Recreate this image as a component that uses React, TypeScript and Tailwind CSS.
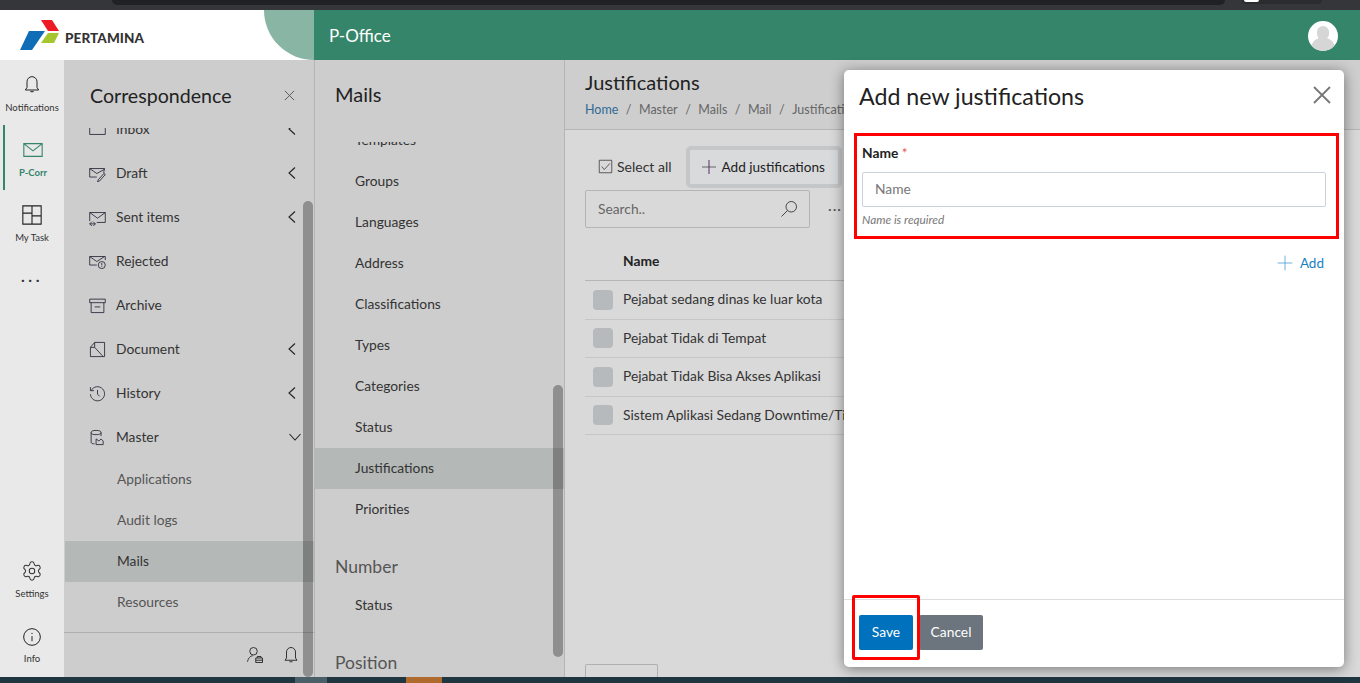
import type { ReactNode } from 'react';
import { Settings } from 'lucide-react';

const FONT = "font-['Lato','Noto_Sans',sans-serif]";

function Ico({ className, children, size = 24 }: { className?: string; children: ReactNode; size?: number }) {
  return (
    <svg width={size} height={size} viewBox="0 0 24 24" fill="none" stroke="currentColor" strokeWidth="1.2" className={className}>
      {children}
    </svg>
  );
}

function Logo() {
  return (
    <svg width="41" height="31" viewBox="0 0 41 31" className="shrink-0">
      <polygon points="21,0 32,0 39,11 28,11" fill="#ed1c24" />
      <polygon points="9,11 25,11 12,30 0,30" fill="#0f6cb6" />
      <polygon points="28,13 39,13 34,23 21,23" fill="#a5c62c" />
    </svg>
  );
}

const Chevron = ({ open }: { open?: boolean }) => (
  <svg width="10" height="14" viewBox="0 0 10 14" fill="none" stroke="#222" strokeWidth="1.1" className={open ? 'rotate-[-90deg]' : ''}>
    <path d="M8 1.5 2 7l6 5.5" />
  </svg>
);

function RailItem({ icon, label, active, tight }: { icon: ReactNode; label: string; active?: boolean; tight?: boolean }) {
  return (
    <div className={`flex h-[65px] flex-col items-center pt-[14px] ${tight ? 'gap-[5px]' : 'gap-[6px]'} ${active ? 'border-l-2 border-[#35856a] ml-[3px] pr-[3px] text-[#35856a] font-bold' : 'text-[#333]'}`}>
      <div className="flex h-[22px] items-center">{icon}</div>
      <span className="text-[9.5px] leading-[12px]">{label}</span>
    </div>
  );
}

const navItems: { label: string; icon: ReactNode; chevron?: boolean }[] = [
  { label: 'Inbox', chevron: true, icon: <path d="M1 5h22v14H1z" /> },
  { label: 'Draft', chevron: true, icon: <><path d="M1 5h21l-1 4v3M1 5v12h10" /><path d="m1 5 10 7 11-6M13 21l8-9 2 1.500-8 9-3 1z" /></> },
  { label: 'Sent items', chevron: true, icon: <><path d="M1 5h22v14H11M1 5v12" /><path d="m1 5 11 8 11-8M1 21h8m-3-3 3 3-3 3M4 18l-3 3 3 3" /></> },
  { label: 'Rejected', icon: <><path d="M1 5h22v5M1 5v12h10" /><path d="m1 5 10 7 11-7" /><circle cx="18" cy="17" r="5" /><path d="M18 14v3.500M18 18.500v1" /></> },
  { label: 'Archive', icon: <><path d="M1 3h22v5H1zM3 8v14h18V8M8 14h8" /></> },
  { label: 'Document', chevron: true, icon: <><path d="M2 9h6l12 13H2zM8 9V2h14v20h-2M2 9l6-7" /></> },
  { label: 'History', chevron: true, icon: <><path d="M3 8a10 10 0 1 1-1 5M2 3v5h5M12 7v6l3 3" /></> },
];

const subItems = ['Applications', 'Audit logs', 'Mails', 'Resources'];

const mailItems = ['Templates', 'Groups', 'Languages', 'Address', 'Classifications', 'Types', 'Categories', 'Status', 'Justifications', 'Priorities'];

const rows = ['Pejabat sedang dinas ke luar kota', 'Pejabat Tidak di Tempat', 'Pejabat Tidak Bisa Akses Aplikasi', 'Sistem Aplikasi Sedang Downtime/Tidak Aktif'];

function Sidebar() {
  return (
    <aside className="relative flex h-full w-[250px] shrink-0 flex-col bg-[#cdcdcd]">
      <div className="flex h-[68px] shrink-0 items-center justify-between pl-[26px] pr-[19px] pt-[3px]">
        <h2 className="text-[19.6px] leading-[26px] text-[#222]">Correspondence</h2>
        <svg width="11" height="11" viewBox="0 0 12 12" stroke="#555" strokeWidth="1"><path d="m1 1 10 10M11 1 1 11" /></svg>
      </div>
      <div className="min-h-0 flex-1 overflow-hidden">
        <div className="mt-[-21px]">
          {navItems.map((n) => (
            <div key={n.label} className="flex h-[44px] items-center pl-[25px] pr-[17px] text-[13.8px] text-[#333]">
              <Ico className="mr-[10px] text-[#2a2438]" size={17}>{n.icon}</Ico>
              <span className="flex-1">{n.label}</span>
              {n.chevron && <Chevron />}
            </div>
          ))}
          <div className="flex h-[44px] items-center pl-[25px] pr-[14px] text-[13.8px] text-[#333]">
            <Ico className="mr-[10px] text-[#2a2438]" size={17}>
              <><ellipse cx="10" cy="5" rx="7" ry="3" /><path d="M3 5v14c0 1 2 2 5 2M17 5v5M10 22v-8l4 3 3-3 3 3v5z" /></>
            </Ico>
            <span className="flex-1">Master</span>
            <Chevron open />
          </div>
          <div className="ml-px">
            {subItems.map((s) => (
              <div key={s} className={`flex h-[41px] items-center pl-[52px] text-[13.8px] ${s === 'Mails' ? 'bg-[#b4b8b7] text-[#333]' : 'text-[#555]'}`}>{s}</div>
            ))}
          </div>
        </div>
      </div>
      <div className="flex h-[45px] shrink-0 items-center justify-end gap-[18px] border-t border-[#b0b0b0] pr-[14px]">
        <Ico size={18} className="text-[#222]"><><circle cx="10" cy="7" r="5" /><path d="M2 21c1-5 4-8 7-8M13 16h9v6h-9zM15 16v-2h5v2M13 19h9" /></></Ico>
        <Ico size={18} className="text-[#222]"><path d="M4 19h16l-2-3V8a6 6 0 0 0-12 0v8zM10 21h4" /></Ico>
      </div>
      <div className="absolute right-[1px] top-[141px] bottom-0 w-[10px] rounded-full bg-black/30" />
    </aside>
  );
}

function MailsPanel() {
  return (
    <section className="relative h-full w-[250px] shrink-0 overflow-hidden border-l border-[#b5b5b5] bg-[#cdcdcd]">
      <h2 className="flex h-[68px] items-center pl-[20px] text-[20px] text-[#222]">Mails</h2>
      <div className="mt-[14px] h-[535px] overflow-hidden">
        <div className="mt-[-22px]">
          {mailItems.map((m) => (
            <div key={m} className={`flex h-[41px] items-center pl-[40px] text-[13.8px] text-[#333] ${m === 'Justifications' ? 'bg-[#b4b8b7]' : ''}`}>{m}</div>
          ))}
          <div className="flex h-[55px] items-end pb-[8px] pl-[20px] text-[17.5px] leading-[21px] text-[#555]">Number</div>
          <div className="flex h-[41px] items-center pl-[40px] text-[13.8px] text-[#333]">Status</div>
          <div className="flex h-[54px] items-end pb-[7px] pl-[20px] text-[17.5px] leading-[21px] text-[#555]">Position</div>
        </div>
      </div>
      <div className="absolute right-[1px] top-[325px] h-[272px] w-[10px] rounded-full bg-black/30" />
    </section>
  );
}

function Content() {
  return (
    <main className="flex h-full min-w-0 flex-1 flex-col overflow-hidden border-l border-[#b5b5b5] bg-[#d9d9d9]">
      <div className="h-[70px] shrink-0 border-b border-[#b5b5b5] bg-[#cecece] pl-[20px] pt-[9px]">
        <h1 className="text-[20px] leading-[26px] text-[#222]">Justifications</h1>
        <div className="mt-[6px] flex gap-[7.5px] whitespace-nowrap text-[12.5px] leading-[18px] text-[#666]">
          <span className="text-[#2f6a94]">Home</span><span>/</span><span>Master</span><span>/</span><span>Mails</span><span>/</span><span>Mail</span><span>/</span><span>Justifications</span>
        </div>
      </div>
      <div className="flex min-h-0 flex-1 flex-col px-[20px] pt-[16px]">
        <div className="flex items-center pl-[13px]">
          <Ico size={15} className="mb-px mr-[4px] text-[#333]"><path d="M2 2h20v20H2zM6 12l4 5 9-10" /></Ico>
          <span className="mb-px text-[14px] leading-[20px] text-[#333]">Select all</span>
          <div className="ml-[14px] flex h-[42px] w-[156px] items-center rounded-[5px] border-4 border-[#c4c6c8] bg-[#d9dadc] pl-[11px] text-[13.6px] text-[#222]">
            <svg width="16" height="16" viewBox="0 0 16 16" strokeWidth="1" className="mr-[5px]">
              <path d="M1 8h14" stroke="#666" />
              <path d="M8 1v14" stroke="#5a2a6a" />
            </svg>
            Add justifications
          </div>
        </div>
        <div className="mt-[2px] flex items-center">
          <div className="flex h-[38px] w-[225px] items-center justify-between rounded-[2px] border border-[#b5b5b5] pl-[12px] pr-[11px] text-[13.8px] text-[#666]">
            Search..
            <Ico size={18} className="text-[#333]"><><circle cx="15" cy="9" r="7" /><path d="M10 14 2 22" /></></Ico>
          </div>
          <span className="ml-[18px] text-[14px] leading-none tracking-[1px] text-[#555]">···</span>
        </div>
        <div className="mt-[14px] flex h-[39px] shrink-0 items-center border-b border-[#b5b5b5] pl-[38px] text-[13.8px] font-bold text-[#222]">Name</div>
        {rows.map((r) => (
          <div key={r} className="flex h-[38.5px] shrink-0 items-center whitespace-nowrap border-b border-[#c6c6c6] pl-[8px] text-[13.8px] text-[#333]">
            <span className="mr-[10px] h-[20px] w-[20px] shrink-0 rounded-[4px] bg-[#b7babc]" />
            {r}
          </div>
        ))}
        <div className="mt-auto h-[13px] w-[73px] shrink-0 overflow-hidden rounded-t-[2px] border border-b-0 border-[#b0b0b0] pl-[12px] pt-[9px] text-[12px] leading-[14px] text-[#333]">10</div>
      </div>
    </main>
  );
}

function Modal() {
  return (
    <div className="absolute left-[844px] top-[70px] flex h-[597px] w-[500px] flex-col rounded-[5px] bg-white shadow-[0_2px_14px_rgba(0,0,0,0.45)]">
      <div className="flex h-[63px] shrink-0 items-start justify-between pl-[15px] pr-[12px] pt-[12px] text-[#222]">
        <h3 className="text-[23.2px] leading-[28px]">Add new justifications</h3>
        <svg width="20" height="20" viewBox="0 0 20 20" stroke="#777" strokeWidth="1.8" className="mt-[3px]"><path d="m2 2 16 16M18 2 2 18" /></svg>
      </div>
      <div className="ml-[10px] mr-[5px] h-[106px] shrink-0 border-[3px] border-[#f00] pl-[5px] pr-[10px] pt-[8px]">
        <div className="text-[13.8px] font-bold leading-[18px] text-[#222]">Name <span className="font-normal text-[#e55]">*</span></div>
        <div className="mt-[10px] flex h-[35px] items-center rounded-[2px] border border-[#ccd2da] pl-[12px] text-[13.8px] text-[#777]">Name</div>
        <div className="mt-[6px] text-[11.8px] italic leading-[14px] text-[#777]">Name is required</div>
      </div>
      <div className="flex items-center justify-end pr-[20px] pt-[14px] text-[13.5px] text-[#1a7fc4]">
        <Ico size={16} className="mr-[7px] text-[#4a9fd8]"><path d="M12 1v22M1 12h22" /></Ico>
        Add
      </div>
      <div className="mt-auto flex h-[68px] shrink-0 items-center gap-[6px] border-t border-[#ddd] pb-[2px] pl-[15px]">
        <button className="relative h-[35px] w-[54px] rounded-[2px] bg-[#0071bc] text-[13.8px] text-white">
          Save
          <span className="absolute left-[-7px] top-[-20px] h-[65px] w-[68px] rounded-[2px] border-[3px] border-[#f00]" />
        </button>
        <button className="h-[35px] w-[64px] rounded-[2px] bg-[#6c757d] text-[13.8px] text-white">Cancel</button>
      </div>
    </div>
  );
}

export default function App() {
  return (
    <div className={`relative flex h-screen w-full flex-col overflow-hidden bg-[#cdcdcd] ${FONT}`}>
      <div className="flex h-[10px] shrink-0 items-start bg-[#35363a]">
        <div className="ml-[112px] h-[5px] w-[1113px] rounded-b-lg bg-[#202124]" />
        <div className="ml-[17px] h-[4px] w-[80px] overflow-hidden rounded-b-lg bg-[#2b2c30] pl-[2px]">
          <div className="h-[2px] w-[15px] rounded-b-full bg-white" />
        </div>
      </div>
      <header className="flex h-[50px] shrink-0">
        <div className="flex w-[314px] shrink-0 items-center justify-between overflow-hidden bg-white pl-[20px]">
          <div className="flex items-center gap-[4px]">
            <Logo />
            <span className="pt-[6px] text-[13.5px] font-black tracking-[0.1px] text-[#333]">PERTAMINA</span>
          </div>
          <div className="h-[50px] w-[50px] rounded-bl-[50px] bg-[#89b5a4]" />
        </div>
        <div className="flex flex-1 items-center justify-between bg-[#35856a] pl-[15px] pr-[22px] text-white">
          <span className="pt-px text-[17px]">P-Office</span>
          <div className="relative mt-px h-[30px] w-[30px] overflow-hidden rounded-full bg-white">
            <div className="mx-auto mt-[5px] h-[14px] w-[12px] rounded-full bg-[#d6d6d6]" />
            <div className="mx-auto mt-[-2px] h-[14px] w-[24px] rounded-t-[10px] bg-[#d6d6d6]" />
          </div>
        </div>
      </header>
      <div className="flex min-h-0 flex-1">
        <nav className="flex h-full w-[64px] shrink-0 flex-col bg-[#e9e9e9]">
          <RailItem label="Notifications" icon={<Ico size={20} className="text-[#222]"><path d="M4 18h16l-2-3V8a6 6 0 0 0-12 0v7zM10 20h4" /></Ico>} />
          <RailItem active label="P-Corr" icon={<Ico size={22}><path d="M2 5h20v14H2zM2 5l10 8 10-8" /></Ico>} />
          <RailItem label="My Task" icon={<Ico size={22} className="text-[#222]"><path d="M2 2h20v20H2zM12 2v20M12 13h10M2 10h10" /></Ico>} />
          <div className="mt-[13px] text-center text-[16px] font-bold leading-none tracking-[3.5px] text-[#333]">...</div>
          <div className="mt-auto flex flex-col gap-px">
            <RailItem label="Settings" icon={<Settings size={22} strokeWidth={1.1} className="text-[#333]" />} />
            <RailItem tight label="Info" icon={<Ico size={20} className="text-[#222]"><><circle cx="12" cy="12" r="10" /><path d="M12 11v6M12 7v1.500" /></></Ico>} />
          </div>
        </nav>
        <Sidebar />
        <MailsPanel />
        <Content />
      </div>
      <div className="flex h-[6px] shrink-0 bg-[#1f3540]">
        <div className="ml-[295px] w-[32px] bg-[#4a5f68]" />
        <div className="ml-[79px] w-[36px] bg-[#b06a2e]" />
      </div>
      <Modal />
    </div>
  );
}
